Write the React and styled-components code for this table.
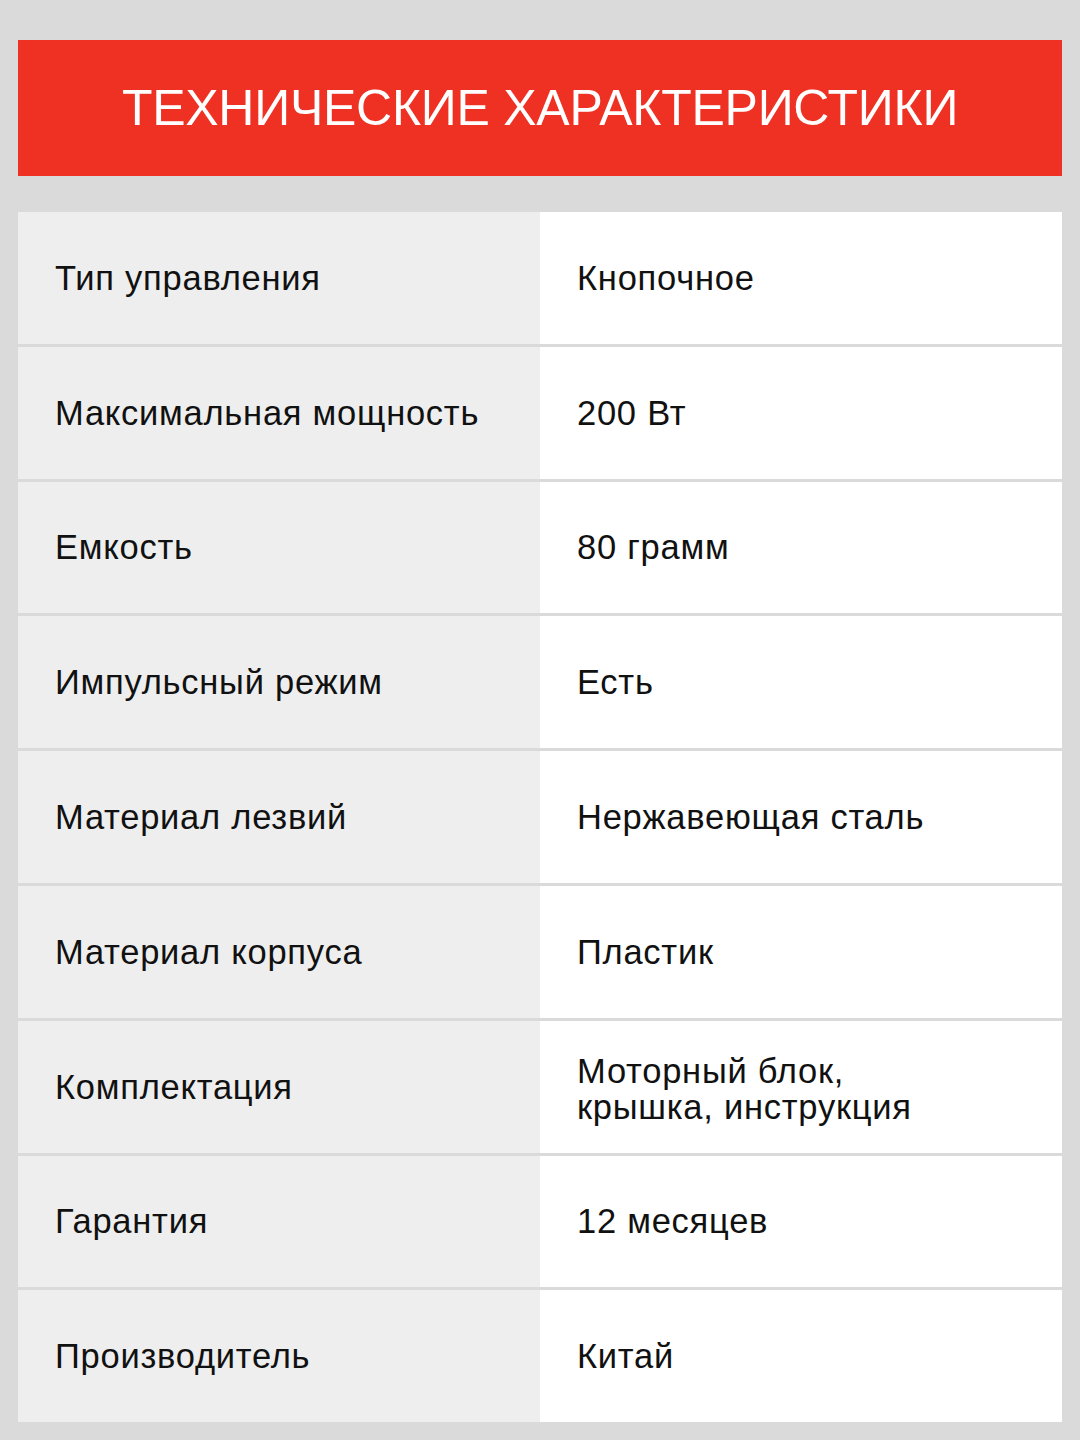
import React from "react";
import styled, { createGlobalStyle } from "styled-components";

const GlobalStyle = createGlobalStyle`
  html, body {
    margin: 0;
    padding: 0;
    background: #dadada;
  }
  body {
    font-family: "Liberation Sans", Arial, sans-serif;
  }
`;

const Page = styled.div`
  width: 1080px;
  height: 1440px;
  box-sizing: border-box;
  padding: 40px 18px 0;
  display: flex;
  flex-direction: column;
  gap: 36px;
`;

const Header = styled.div`
  height: 136px;
  background: #ef3124;
  display: flex;
  align-items: center;
  justify-content: center;
`;

const Title = styled.h1`
  margin: 0;
  color: #fff;
  font-weight: 400;
  font-size: 50px;
  letter-spacing: -0.25px;
`;

const Table = styled.div`
  display: grid;
  grid-template-columns: 522px 522px;
  grid-auto-rows: 131.8px;
  row-gap: 3px;
`;

const Cell = styled.div`
  display: flex;
  align-items: center;
  padding: 0 37px;
  background: ${(p) => (p.$value ? "#ffffff" : "#eeeeee")};
  color: #111;
  font-size: 34.5px;
  letter-spacing: 0.75px;
  line-height: 36px;
`;

const ValueText = styled.span`
  white-space: pre-line;
  margin-top: ${(p) => (p.$multi ? "4px" : "0")};
`;

const specs = [
  ["Тип управления", "Кнопочное"],
  ["Максимальная мощность", "200 Вт"],
  ["Емкость", "80 грамм"],
  ["Импульсный режим", "Есть"],
  ["Материал лезвий", "Нержавеющая сталь"],
  ["Материал корпуса", "Пластик"],
  ["Комплектация", "Моторный блок,\nкрышка, инструкция"],
  ["Гарантия", "12 месяцев"],
  ["Производитель", "Китай"],
];

export default function App() {
  return (
    <>
      <GlobalStyle />
      <Page>
        <Header>
          <Title>ТЕХНИЧЕСКИЕ ХАРАКТЕРИСТИКИ</Title>
        </Header>
        <Table>
          {specs.map(([name, value]) => (
            <React.Fragment key={name}>
              <Cell>{name}</Cell>
              <Cell $value>
                <ValueText $multi={value.includes("\n")}>{value}</ValueText>
              </Cell>
            </React.Fragment>
          ))}
        </Table>
      </Page>
    </>
  );
}
